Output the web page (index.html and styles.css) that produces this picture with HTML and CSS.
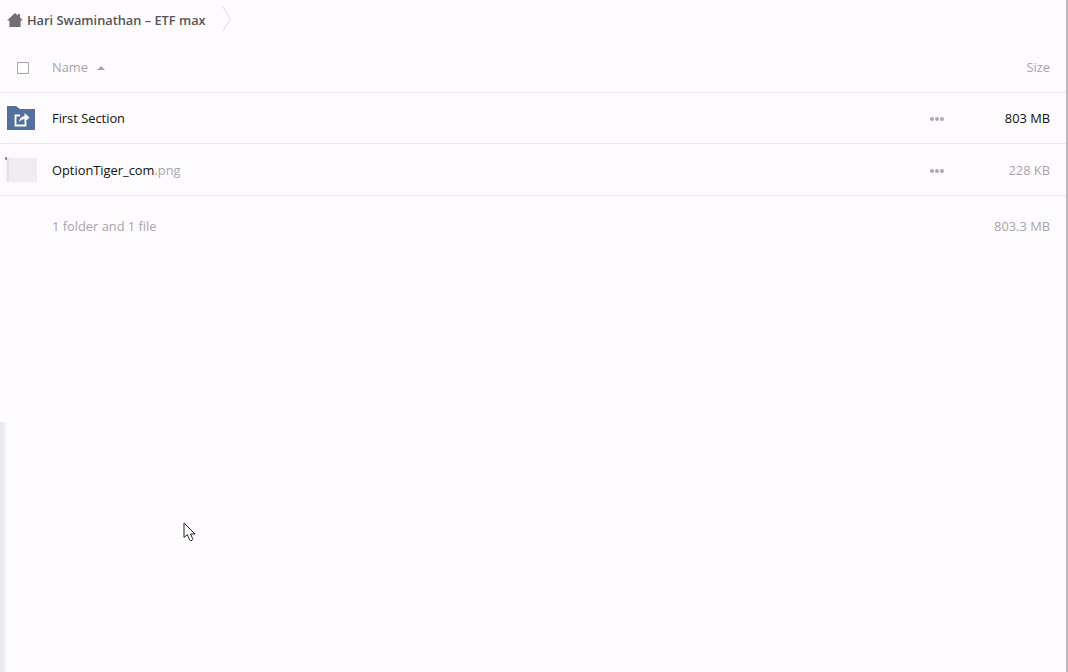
FILE: index.html
```html
<!DOCTYPE html>
<html lang="en">
<head>
    <meta charset="UTF-8">
    <meta name="viewport" content="width=device-width, initial-scale=1.0">
    <title>Files</title>
    <link rel="stylesheet" href="styles.css">
</head>
<body>
    <nav class="breadcrumb">
        <svg class="home-icon" width="16" height="14" viewBox="0 0 16 14">
            <path d="M8 0 L11 2.6 V1 H13 V4.4 L16 7.4 H13.6 V14 H2.4 V7.4 H0 Z" fill="#716d71"/>
        </svg>
        <span class="crumb">Hari Swaminathan – ETF max</span>
        <svg class="crumb-sep" width="10" height="26" viewBox="0 0 10 26">
            <path d="M1 1 L8.5 13 L1 25" fill="none" stroke="#dcdadc" stroke-width="1"/>
        </svg>
    </nav>

    <div class="file-table">
        <div class="row head-row">
            <div class="col-check"><span class="checkbox"></span></div>
            <div class="col-name">Name <span class="sort-arrow"></span></div>
            <div class="col-size">Size</div>
        </div>

        <div class="row folder-row">
            <div class="col-check">
                <svg class="folder-icon" width="28" height="24" viewBox="0 0 28 24">
                    <path d="M0 0 H9 L13 3 H28 V24 H0 Z" fill="#54719e"/>
                    <path d="M18.5 15 V19.5 H8.5 V9.5 H13" fill="none" stroke="#fff" stroke-width="1.8"/>
                    <path d="M12 16 Q12.5 11 17.5 10 V7 L22.5 11.5 L17.5 16 V13 Q14.5 13 12 16 Z" fill="#fff"/>
                </svg>
            </div>
            <div class="col-name name-dark">First Section</div>
            <div class="col-actions"><span class="dots"><i></i><i></i><i></i></span></div>
            <div class="col-size size-dark">803 MB</div>
        </div>

        <div class="row file-row">
            <div class="col-check">
                <div class="thumb"></div>
            </div>
            <div class="col-name name-dark">OptionTiger_com<span class="ext">.png</span></div>
            <div class="col-actions"><span class="dots"><i></i><i></i><i></i></span></div>
            <div class="col-size">228 KB</div>
        </div>

        <div class="row summary-row">
            <div class="col-check"></div>
            <div class="col-name">1 folder and 1 file</div>
            <div class="col-size">803.3 MB</div>
        </div>
    </div>

    <div class="edge-shadow"></div>
    <div class="right-edge"></div>

    <svg class="cursor" width="13" height="20" viewBox="0 0 13 20">
        <path d="M1 1 V15.5 L4.4 12.6 L6.6 18 Q7.5 19 9 18.4 Q10 17.6 9.6 16.6 L7.6 12 H12 Z" fill="#fff" stroke="#222" stroke-width="1"/>
    </svg>
</body>
</html>
```

FILE: styles.css
```css
* {
    margin: 0;
    padding: 0;
    box-sizing: border-box;
}

html, body {
    height: 100%;
    overflow: hidden;
}

body {
    font-family: "Open Sans", Arial, sans-serif;
    font-size: 12.85px;
    color: #a8a5a8;
    background-color: #fdfbfe;
}

.breadcrumb {
    display: flex;
    align-items: center;
    height: 40px;
    padding-left: 7px;
}

.home-icon {
    margin-right: 4px;
    margin-top: -1px;
}

.crumb {
    color: #555;
    font-weight: 600;
    font-size: 12.8px;
}

.crumb-sep {
    margin-left: 16px;
    margin-top: -2px;
}

.row {
    display: flex;
    align-items: center;
    padding-right: 18px;
    border-bottom: 1px solid #e9e7e9;
}

.head-row {
    height: 53px;
    padding-top: 1px;
}

.folder-row {
    height: 51px;
}

.file-row {
    height: 52px;
}

.summary-row {
    height: 60px;
    border-bottom: none;
}

.col-check {
    width: 52px;
    flex-shrink: 0;
    display: flex;
    align-items: center;
}

.col-name {
    flex: 1;
}

.col-actions {
    width: 30px;
    display: flex;
    justify-content: center;
    margin-top: 2px;
}

.col-size {
    width: 98px;
    text-align: right;
}

.name-dark {
    color: #111;
}

.size-dark {
    color: #111;
}

.ext {
    color: #aaa8aa;
}

.checkbox {
    display: block;
    width: 12px;
    height: 12px;
    margin-left: 17px;
    margin-top: 2px;
    border: 1px solid #a9a7a9;
    background: #fff;
}

.sort-arrow {
    display: inline-block;
    width: 0;
    height: 0;
    margin-left: 6px;
    vertical-align: 2px;
    border-left: 4px solid transparent;
    border-right: 4px solid transparent;
    border-bottom: 4px solid #a8a5a8;
}

.folder-icon {
    margin-left: 7px;
}

.thumb {
    position: relative;
    width: 30px;
    height: 24px;
    margin-left: 7px;
    background-color: #eeecee;
    border-left: 2px solid #e2e0e2;
    box-shadow: -2px 0 3px #f4f2f4;
}

/* small dark tick on the thumbnail corner */
.thumb::before {
    content: "";
    position: absolute;
    left: -4px;
    top: -1px;
    width: 2px;
    height: 3px;
    background-color: #8f8d8f;
}

.dots {
    display: flex;
    gap: 1px;
}

.dots i {
    display: block;
    width: 4px;
    height: 4px;
    border-radius: 50%;
    background-color: #aaa8aa;
}

.edge-shadow {
    position: absolute;
    left: 0;
    top: 422px;
    bottom: 0;
    width: 7px;
    background: linear-gradient(to right, #e8e7e9, #eeedef 60%, #fdfbfe);
}

.right-edge {
    position: absolute;
    right: 0;
    top: 0;
    bottom: 0;
    width: 2px;
    background-color: #b9b7ba;
}

.cursor {
    position: absolute;
    left: 183px;
    top: 522px;
}
```
